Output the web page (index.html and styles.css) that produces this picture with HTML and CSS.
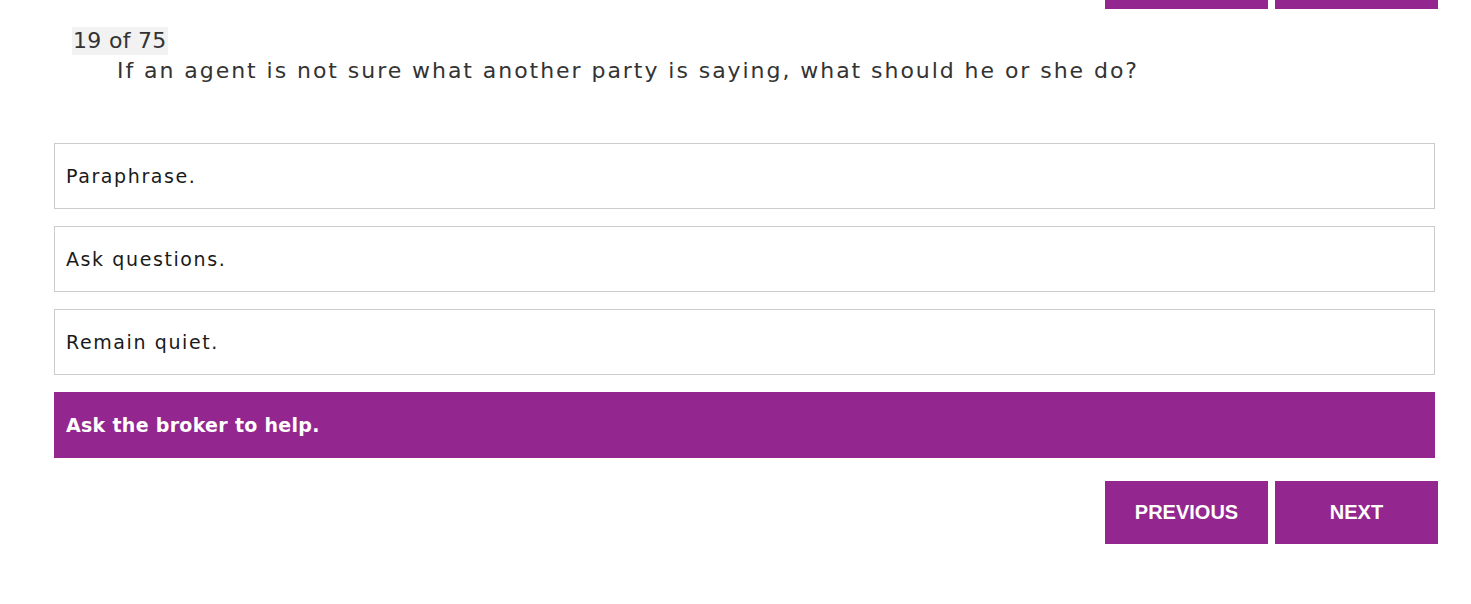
FILE: index.html
```html
<!DOCTYPE html>
<html lang="en">
<head>
<meta charset="utf-8">
<title>Quiz</title>
<link rel="stylesheet" href="styles.css">
</head>
<body>
<div class="page">
  <div class="nav nav-top">
    <button class="btn">PREVIOUS</button>
    <button class="btn">NEXT</button>
  </div>
  <div class="header">
    <span class="counter">19 of 75</span>
    <p class="question">If an agent is not sure what another party is saying, what should he or she do?</p>
  </div>
  <ul class="options">
    <li class="option">Paraphrase.</li>
    <li class="option">Ask questions.</li>
    <li class="option">Remain quiet.</li>
    <li class="option selected">Ask the broker to help.</li>
  </ul>
  <div class="nav">
    <button class="btn">PREVIOUS</button>
    <button class="btn">NEXT</button>
  </div>
</div>
</body>
</html>
```

FILE: styles.css
```css
html, body {
  margin: 0;
  padding: 0;
  background: #ffffff;
}
.page {
  width: 1384px;
  padding-left: 54px;
  font-family: "DejaVu Sans", "Noto Sans", sans-serif;
  color: #333333;
}
.nav {
  display: flex;
  justify-content: flex-end;
  gap: 7px;
}
.nav-top {
  margin-top: -54px;
}
.btn {
  width: 163px;
  height: 63px;
  border: none;
  margin: 0;
  padding: 0;
  background: #93278f;
  color: #ffffff;
  font-family: "Liberation Sans", Arial, sans-serif;
  font-weight: bold;
  font-size: 20px;
}
.header {
  padding-left: 18px;
  margin-top: 18px;
}
.counter {
  display: inline-block;
  background: #f2f2f2;
  font-size: 22px;
  letter-spacing: 0.3px;
  line-height: 28px;
  padding: 0 1px;
  color: #333333;
}
.question {
  margin: 0;
  padding-left: 45px;
  font-size: 22px;
  letter-spacing: 1.95px;
  line-height: 32px;
  color: #333333;
}
.options {
  list-style: none;
  margin: 56px 0 0 0;
  padding: 0;
  width: 1381px;
  display: flex;
  flex-direction: column;
  gap: 17px;
}
.option {
  border: 1px solid #cccccc;
  height: 64px;
  box-sizing: content-box;
  padding: 0 11px;
  display: flex;
  align-items: center;
  font-size: 19px;
  letter-spacing: 1.6px;
  color: #1a1a1a;
}
.option.selected {
  background: #93278f;
  border-color: #93278f;
  color: #ffffff;
  font-weight: bold;
  letter-spacing: 0.3px;
}
.options + .nav {
  margin-top: 23px;
}
```
